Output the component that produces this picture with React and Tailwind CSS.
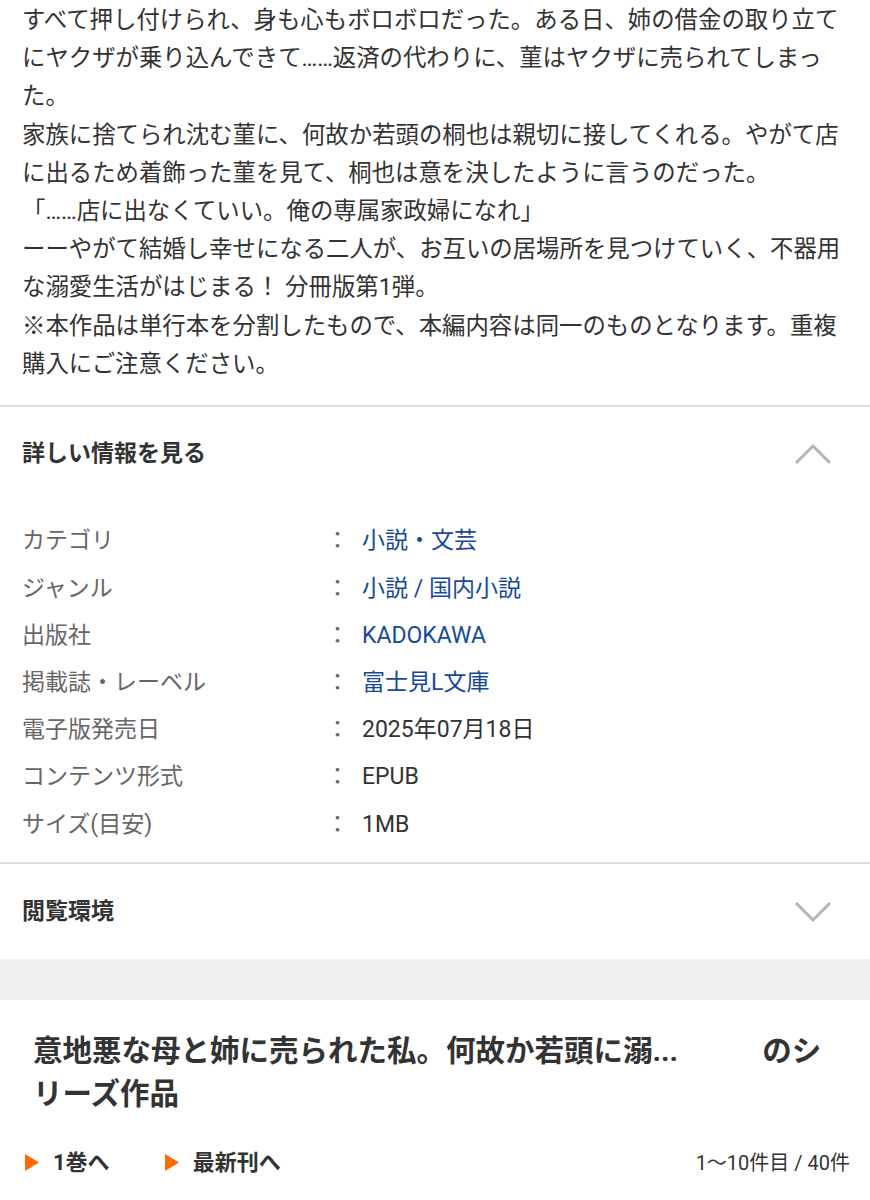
import React from 'react';

const FONT = { fontFamily: 'Roboto, "Noto Sans CJK JP", sans-serif' };

const INFO = [
  { label: 'カテゴリ', value: '小説・文芸', link: true },
  { label: 'ジャンル', value: '小説 / 国内小説', link: true },
  { label: '出版社', value: 'KADOKAWA', link: true },
  { label: '掲載誌・レーベル', value: '富士見L文庫', link: true },
  { label: '電子版発売日', value: '2025年07月18日' },
  { label: 'コンテンツ形式', value: 'EPUB' },
  { label: 'サイズ(目安)', value: '1MB' },
];

const Chevron = ({ up }) => (
  <svg width="38" height="22" viewBox="0 0 38 22" fill="none">
    <path
      d={up ? 'M2 20 L19 3 L36 20' : 'M2 2 L19 19 L36 2'}
      stroke="#b5b5b5"
      strokeWidth="3"
    />
  </svg>
);

const Triangle = () => (
  <svg width="14" height="17" viewBox="0 0 14 17">
    <path d="M0 0 L14 8.5 L0 17 Z" fill="#ff6a00" />
  </svg>
);

const SectionHeader = ({ title, up, height }) => (
  <div className={`flex items-center justify-between pl-[22px] pr-[38px] ${height}`}>
    <h2 className="text-[23px] font-bold text-[#333]">{title}</h2>
    <Chevron up={up} />
  </div>
);

const App = () => {
  return (
    <div className="w-[870px] bg-white text-[#333] overflow-hidden" style={FONT}>
      {/* あらすじ */}
      <p className="px-[22px] pt-[1px] pb-[22px] text-[23.4px] leading-[38.2px] text-[#333]">
        すべて押し付けられ、身も心もボロボロだった。ある日、姉の借金の取り立てにヤクザが乗り込んできて……返済の代わりに、菫はヤクザに売られてしまった。
        <br />
        家族に捨てられ沈む菫に、何故か若頭の桐也は親切に接してくれる。やがて店に出るため着飾った菫を見て、桐也は意を決したように言うのだった。
        <br />
        「……店に出なくていい。俺の専属家政婦になれ」
        <br />
        ーーやがて結婚し幸せになる二人が、お互いの居場所を見つけていく、不器用な溺愛生活がはじまる！ 分冊版第1弾。
        <br />
        ※本作品は単行本を分割したもので、本編内容は同一のものとなります。重複購入にご注意ください。
      </p>

      {/* 詳しい情報 */}
      <div className="border-t-2 border-[#dedede]">
        <SectionHeader title="詳しい情報を見る" up height="h-[94px]" />
        <dl className="pt-[17px] pb-[14px]">
          {INFO.map((row) => (
            <div key={row.label} className="flex items-center h-[47.2px] pl-[22px] text-[23px]">
              <dt className="w-[304px] text-[#666]">{row.label}</dt>
              <span className="w-[36px] text-[#666]">：</span>
              <dd className={row.link ? 'text-[#17499a]' : 'text-[#333]'}>{row.value}</dd>
            </div>
          ))}
        </dl>
      </div>

      {/* 閲覧環境 */}
      <div className="border-t-2 border-[#dedede]">
        <SectionHeader title="閲覧環境" height="h-[95px]" />
      </div>

      <div className="h-[41px] bg-[#f0f0f0]" />

      {/* シリーズ作品 */}
      <section className="pt-[30px] pb-[20px]">
        <h2 className="px-[33px] text-[29.5px] font-bold leading-[43px] text-[#333]">
          意地悪な母と姉に売られた私。何故か若頭に溺...
          <span className="pl-[84px]">のシリーズ作品</span>
        </h2>
        <div className="flex items-center justify-between pt-[30px] pl-[25px] pr-[20px]">
          <div className="flex items-center">
            <a className="flex items-center gap-[14px] text-[22px] font-bold text-[#333]">
              <Triangle />
              <span>1巻へ</span>
            </a>
            <a className="flex items-center gap-[14px] ml-[55px] text-[22px] font-bold text-[#333]">
              <Triangle />
              <span>最新刊へ</span>
            </a>
          </div>
          <span className="text-[20px] text-[#333]">1〜10件目 / 40件</span>
        </div>
      </section>
    </div>
  );
};

export default App;
